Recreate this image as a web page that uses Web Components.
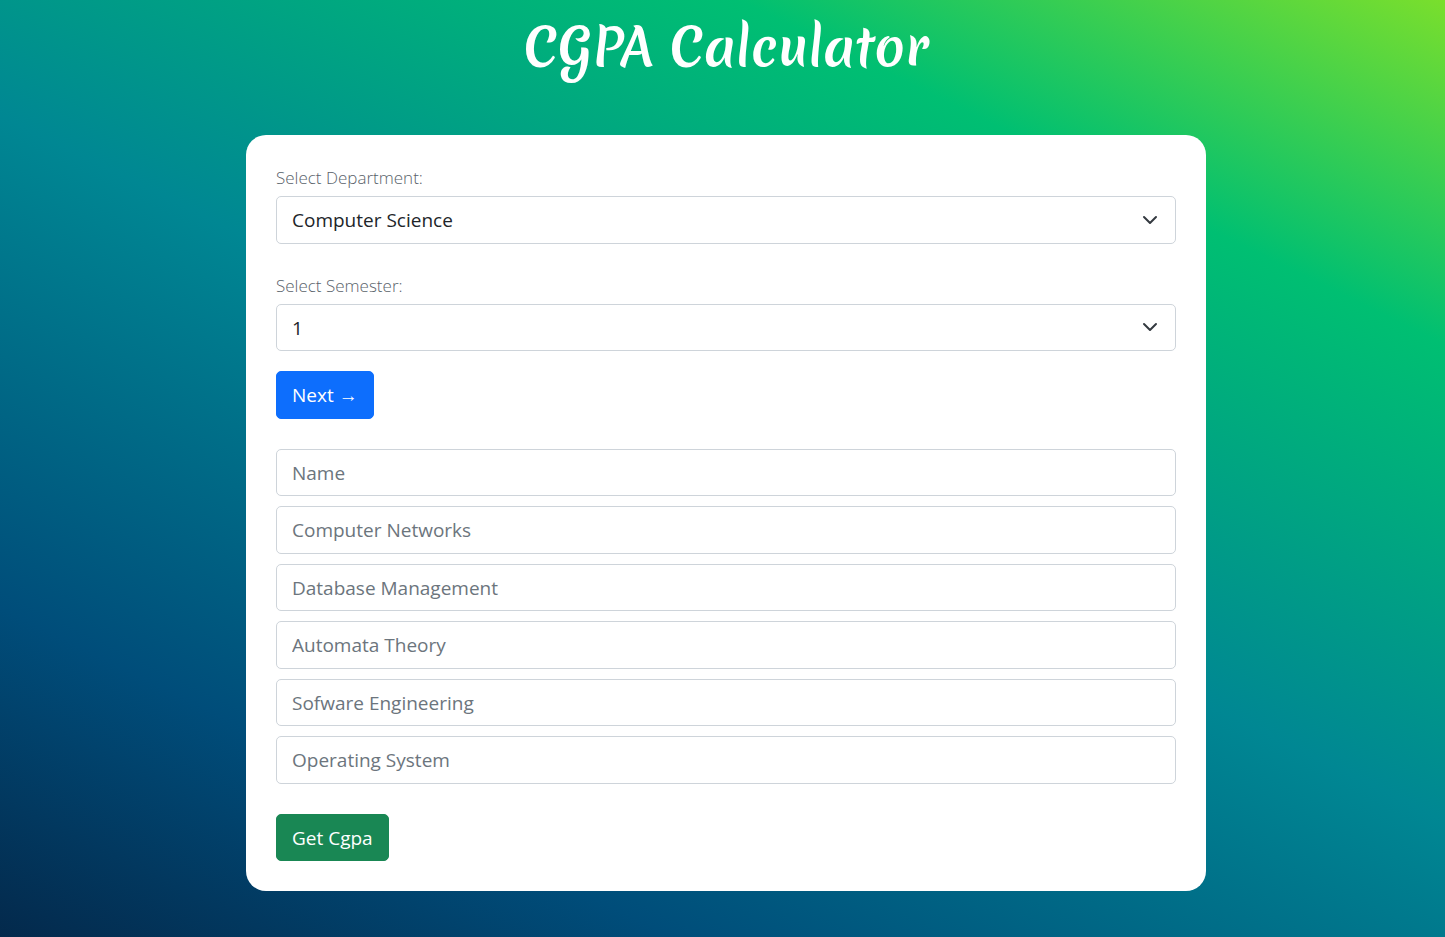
<!DOCTYPE html>
<html lang="en">
<head>
<meta charset="utf-8">
<meta name="viewport" content="width=device-width, initial-scale=1">
<title>CGPA Calculator</title>
<style>
  body {
    margin: 0;
    min-height: 100vh;
    font-family: "Segoe UI", "Open Sans", "Noto Sans", sans-serif;
    background: linear-gradient(26deg, #051937 -9%, #004d7a 20%, #008793 50%, #00bf72 79%, #a8eb12 108%) no-repeat;
  }
</style>
</head>
<body>
<cgpa-app></cgpa-app>
<script>
const control = `
  *, *::before, *::after { box-sizing: border-box; }
  :host { display: block; }
`;

class SelectField extends HTMLElement {
  connectedCallback() {
    const root = this.attachShadow({ mode: "open" });
    root.innerHTML = `
      <style>${control}
        label { display: block; margin-bottom: 4px; font-size: 17px; line-height: 28px; font-weight: 300; color: #59626a; }
        .box { display: grid; align-items: center; }
        select, svg { grid-area: 1 / 1; }
        select {
          appearance: none; width: 100%; padding: 9px 48px 8px 15px;
          border: 1px solid #ced4da; border-radius: 5px; background: #fff;
          font: inherit; font-size: 19px; line-height: 1.5; color: #212529;
        }
        svg { justify-self: end; width: 16px; height: 16px; margin-right: 18px; pointer-events: none; }
      </style>
      <label for="field"></label>
      <div class="box">
        <select id="field"></select>
        <svg viewBox="0 0 16 16" fill="none" stroke="#343a40" stroke-width="2" stroke-linecap="round" stroke-linejoin="round" aria-hidden="true"><path d="M2 5l6 6 6-6"/></svg>
      </div>`;
    root.querySelector("label").textContent = this.getAttribute("label");
    const option = document.createElement("option");
    option.textContent = this.getAttribute("value");
    root.querySelector("select").append(option);
  }
}

class TextField extends HTMLElement {
  connectedCallback() {
    const root = this.attachShadow({ mode: "open" });
    root.innerHTML = `
      <style>${control}
        input {
          display: block; width: 100%; padding: 9px 15px 8px;
          border: 1px solid #ced4da; border-radius: 5px; background: #fff;
          font: inherit; font-size: 19px; line-height: 1.5; color: #212529;
        }
        input::placeholder { color: #6c757d; opacity: 1; }
      </style>
      <input type="text">`;
    const input = root.querySelector("input");
    input.placeholder = this.getAttribute("label");
    input.setAttribute("aria-label", this.getAttribute("label"));
  }
}

class ActionButton extends HTMLElement {
  connectedCallback() {
    this.attachShadow({ mode: "open" }).innerHTML = `
      <style>${control}
        button {
          display: block; padding: 9px 15px 8px; border: 1px solid var(--tone, #0d6efd); border-radius: 5px;
          background: var(--tone, #0d6efd); color: #fff; font: inherit; font-size: 19px; line-height: 1.5;
          white-space: nowrap; cursor: pointer;
        }
      </style>
      <button type="button"><slot></slot></button>`;
  }
}

class CgpaApp extends HTMLElement {
  connectedCallback() {
    this.attachShadow({ mode: "open" }).innerHTML = `
      <style>${control}
        :host { padding: 7px 20px 45px 27px; }
        h1 {
          margin: 0 0 48px; text-align: center; color: #fff;
          font: 700 50px/80px "Merienda", "Merienda One", "Lato", sans-serif;
        }
        main {
          max-width: 960px; margin: 0 auto; padding: 29px 30px 30px;
          background: #fff; border-radius: 20px;
          display: flex; flex-direction: column; align-items: stretch;
        }
        .pick { display: grid; gap: 28px; }
        .next { align-self: flex-start; margin: 20px 0 30px; }
        .subjects { display: grid; gap: 10px; }
        .result { align-self: flex-start; margin-top: 30px; --tone: #198754; }
      </style>
      <h1>CGPA Calculator</h1>
      <main>
        <div class="pick">
          <select-field label="Select Department:" value="Computer Science"></select-field>
          <select-field label="Select Semester:" value="1"></select-field>
        </div>
        <action-button class="next">Next →</action-button>
        <div class="subjects">
          <text-field label="Name"></text-field>
          <text-field label="Computer Networks"></text-field>
          <text-field label="Database Management"></text-field>
          <text-field label="Automata Theory"></text-field>
          <text-field label="Sofware Engineering"></text-field>
          <text-field label="Operating System"></text-field>
        </div>
        <action-button class="result">Get Cgpa</action-button>
      </main>`;
  }
}

customElements.define("select-field", SelectField);
customElements.define("text-field", TextField);
customElements.define("action-button", ActionButton);
customElements.define("cgpa-app", CgpaApp);
</script>
</body>
</html>
